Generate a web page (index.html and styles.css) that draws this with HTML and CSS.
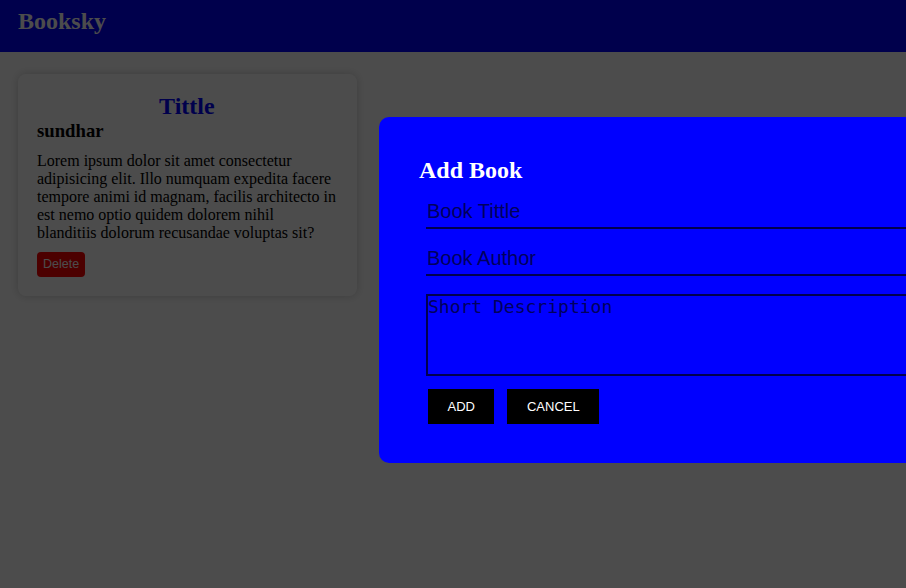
FILE: index.html
```html
<!DOCTYPE html>
<html lang="en">
<head>
<meta charset="utf-8">
<title>Booksky</title>
<link rel="stylesheet" href="styles.css">
</head>
<body>
  <header class="topbar">
    <h1 class="brand">Booksky</h1>
  </header>
  <main class="books">
    <article class="card">
      <h2 class="card-title">Tittle</h2>
      <h3 class="card-author">sundhar</h3>
      <p class="card-text">Lorem ipsum dolor sit amet consectetur adipisicing elit. Illo numquam expedita facere tempore animi id magnam, facilis architecto in est nemo optio quidem dolorem nihil blanditiis dolorum recusandae voluptas sit?</p>
      <button class="btn-delete" type="button">Delete</button>
    </article>
  </main>

  <div class="overlay"></div>
  <section class="modal">
    <h2 class="modal-title">Add Book</h2>
    <form class="modal-form">
      <input class="field field-first" type="text" placeholder="Book Tittle">
      <input class="field field-second" type="text" placeholder="Book Author">
      <textarea class="desc" placeholder="Short Description"></textarea>
      <div class="actions">
        <button class="btn" type="button">ADD</button>
        <button class="btn" type="button">CANCEL</button>
      </div>
    </form>
  </section>
</body>
</html>
```
FILE: styles.css
```css
html, body {
  margin: 0;
  padding: 0;
  height: 100%;
}
body {
  background: #ffffff;
  font-family: "Liberation Serif", "Times New Roman", serif;
  overflow: hidden;
}
.topbar {
  background: #0000ff;
  height: 52px;
  padding: 8px 18px 0;
  box-sizing: border-box;
}
.brand {
  margin: 0;
  font-size: 24px;
  font-weight: bold;
  color: #ffffff;
  line-height: normal;
}
.books {
  padding: 22px 18px;
}
.card {
  width: 339px;
  box-sizing: border-box;
  padding: 19px 20.25px 19px 19px;
  border-radius: 8px;
  background: #ffffff;
  box-shadow: 0 0 10px rgba(0, 0, 0, 0.2);
}
.card-title {
  margin: 0;
  font-size: 24px;
  text-align: center;
  color: #0000ff;
  line-height: normal;
}
.card-author {
  margin: 0;
  font-size: 18.72px;
  line-height: normal;
  color: #000;
}
.card-text {
  margin: 10px 0 10px;
  font-size: 16px;
  line-height: 18px;
  color: #000;
}
.btn-delete {
  display: block;
  border: none;
  border-radius: 4px;
  background: #ff0000;
  color: #ffffff;
  font-family: "Liberation Sans", Arial, sans-serif;
  font-size: 12.5px;
  line-height: 15px;
  padding: 5px 6px;
}
.overlay {
  position: fixed;
  inset: 0;
  background: rgba(0, 0, 0, 0.7);
}
.modal {
  position: fixed;
  left: 379px;
  top: 117px;
  width: 700px;
  box-sizing: border-box;
  padding: 40px 40px 39px;
  background: #0000ff;
  border-radius: 10px;
}
.modal-title {
  margin: 0;
  font-size: 24px;
  font-weight: bold;
  color: #ffffff;
  line-height: normal;
}
.modal-form {
  display: flex;
  flex-direction: column;
  margin-left: 7px;
}
.field {
  display: block;
  width: 100%;
  box-sizing: border-box;
  background: transparent;
  border: none;
  border-bottom: 2px solid #00004f;
  padding: 4px 1px 4px;
  font-family: "Liberation Sans", Arial, sans-serif;
  font-size: 20px;
  line-height: 23px;
  color: #000;
  outline: none;
}
.field::placeholder {
  color: #00005c;
  opacity: 1;
}
.field-first {
  margin-top: 12px;
}
.field-second {
  margin-top: 14px;
}
.desc {
  display: block;
  width: 100%;
  height: 82px;
  box-sizing: border-box;
  margin-top: 18px;
  padding: 0;
  background: transparent;
  border: 2px solid #00004f;
  font-family: "DejaVu Sans Mono", monospace;
  font-size: 18px;
  resize: none;
  outline: none;
}
.desc::placeholder {
  color: #00005c;
  opacity: 1;
}
.actions {
  display: flex;
  gap: 13px;
  margin-top: 13px;
  margin-left: 2px;
}
.btn {
  border: none;
  background: #000000;
  color: #ffffff;
  font-family: "Liberation Sans", Arial, sans-serif;
  font-size: 13px;
  line-height: 15px;
  padding: 10px 19.5px;
  height: 35px;
  box-sizing: border-box;
}
```
